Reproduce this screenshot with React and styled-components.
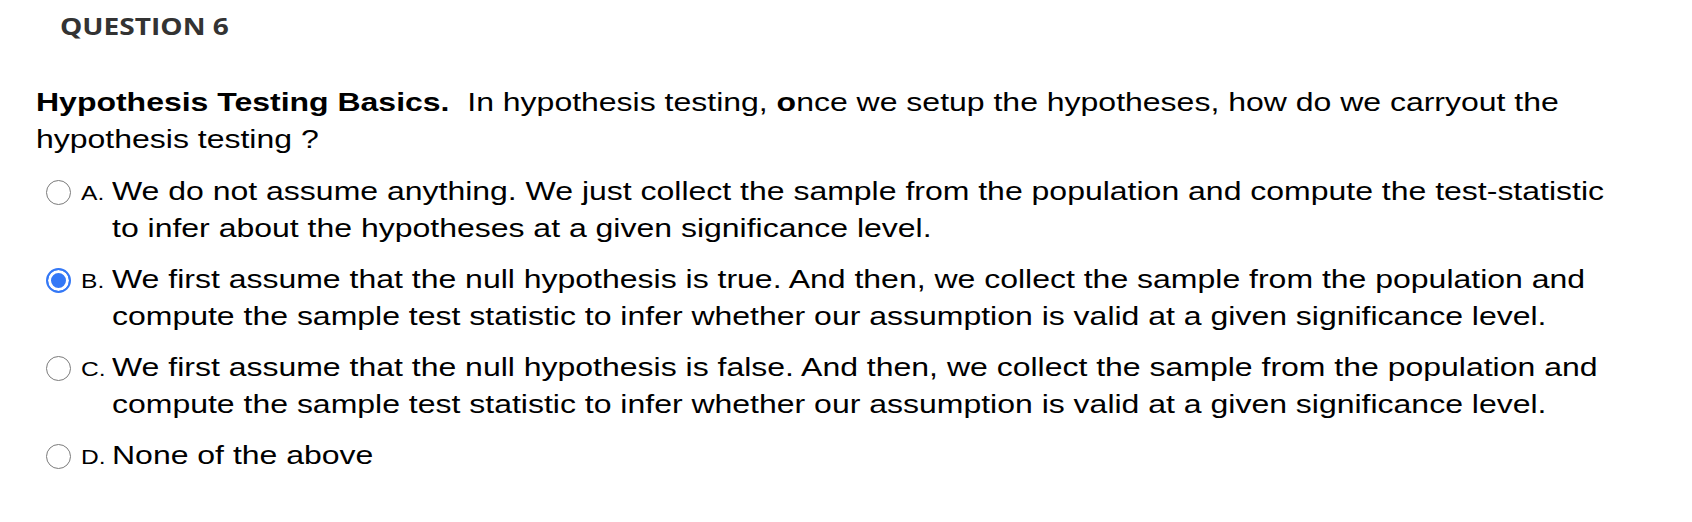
import React from "react";
import styled, { createGlobalStyle } from "styled-components";

// the source screenshot is wider than it is tall (about 1.23x), so text is stretched on x
const WIDE = 1.23;

const GlobalStyle = createGlobalStyle`
  html, body {
    margin: 0;
    padding: 0;
    background: #ffffff;
  }
`;

const Page = styled.div`
  width: 1620px;
  padding: 10px 0 0 0;
  box-sizing: border-box;
`;

const Title = styled.h2`
  width: fit-content;
  margin: 0 0 0 60px;
  font-family: "Open Sans", sans-serif;
  font-weight: 700;
  font-size: 24px;
  line-height: 32px;
  color: #333333;
  transform: scaleX(1.17);
  transform-origin: left top;
`;

const Prompt = styled.p`
  margin: 42px 0 0 36px;
  width: ${1584 / WIDE}px;
  font-family: "Liberation Sans", Arial, sans-serif;
  font-size: 26px;
  line-height: 37px;
  color: #000000;
  transform: scaleX(${WIDE});
  transform-origin: left top;

  b {
    font-weight: 700;
  }
`;

const Choices = styled.div`
  display: flex;
  flex-direction: column;
  gap: 14px;
  margin: 15px 0 0 46px;
`;

const Choice = styled.label`
  display: flex;
  align-items: baseline;
  font-family: "Liberation Sans", Arial, sans-serif;
  color: #000000;
`;

const Radio = styled.span`
  align-self: flex-start;
  flex: none;
  width: 25px;
  height: 25px;
  margin-top: 7px;
  border-radius: 50%;
  box-sizing: border-box;
  border: ${(p) => (p.$checked ? "2px solid #3478f6" : "1.5px solid #7b7b7b")};
  background: ${(p) => (p.$checked ? "#3478f6" : "#ffffff")};
  box-shadow: ${(p) => (p.$checked ? "inset 0 0 0 3px #ffffff" : "none")};
`;

const Letter = styled.span`
  flex: none;
  width: 31px;
  margin-left: 10px;
  font-size: 21px;
  line-height: 37px;
  transform: scaleX(1.17);
  transform-origin: left top;
`;

const ChoiceText = styled.span`
  flex: none;
  width: ${1508 / WIDE}px;
  font-size: 26px;
  line-height: 37px;
  transform: scaleX(${WIDE});
  transform-origin: left top;
`;

const choices = [
  {
    key: "A.",
    text: "We do not assume anything. We just collect the sample from the population and compute the test-statistic to infer about the hypotheses at a given significance level.",
  },
  {
    key: "B.",
    text: "We first assume that the null hypothesis is true. And then, we collect the sample from the population and compute the sample test statistic to infer whether our assumption is valid at a given significance level.",
    checked: true,
  },
  {
    key: "C.",
    text: "We first assume that the null hypothesis is false. And then, we collect the sample from the population and compute the sample test statistic to infer whether our assumption is valid at a given significance level.",
  },
  {
    key: "D.",
    text: "None of the above",
  },
];

const App = () => {
  return (
    <Page>
      <GlobalStyle />
      <Title>QUESTION 6</Title>
      <Prompt>
        <b>Hypothesis Testing Basics.</b>
        {"\u00a0 In hypothesis testing, "}
        <b>o</b>
        {"nce we setup the hypotheses, how do we carryout the "}
        {"hypothesis testing ?"}
      </Prompt>
      <Choices>
        {choices.map((c) => (
          <Choice key={c.key}>
            <Radio $checked={c.checked} />
            <Letter>{c.key}</Letter>
            <ChoiceText>{c.text}</ChoiceText>
          </Choice>
        ))}
      </Choices>
    </Page>
  );
};

export default App;
